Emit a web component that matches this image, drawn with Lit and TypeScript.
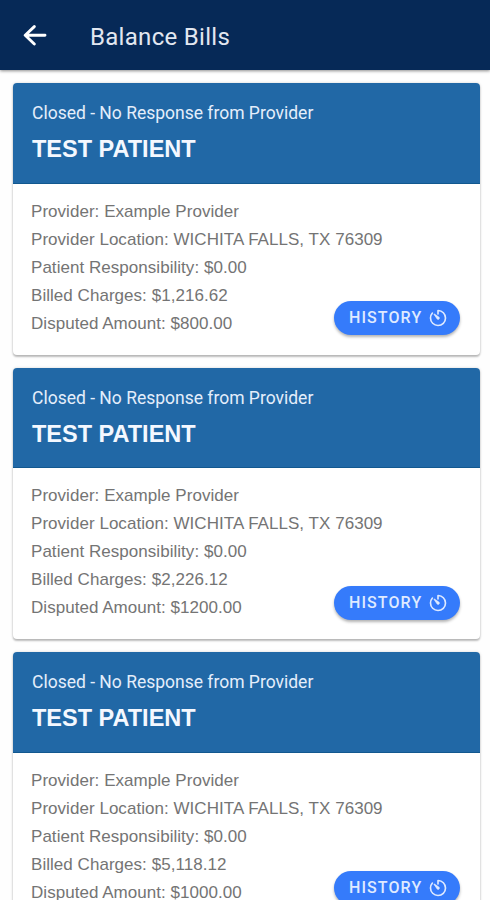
import { LitElement, html, css } from "lit";
import { customElement, property } from "lit/decorators.js";

interface Bill {
  status: string;
  patient: string;
  provider: string;
  location: string;
  responsibility: string;
  billed: string;
  disputed: string;
}

const bill = (billed: string, disputed: string): Bill => ({
  status: "Closed - No Response from Provider",
  patient: "TEST PATIENT",
  provider: "Example Provider",
  location: "WICHITA FALLS, TX 76309",
  responsibility: "$0.00",
  billed,
  disputed,
});

const bills: Bill[] = [
  bill("$1,216.62", "$800.00"),
  bill("$2,226.12", "$1200.00"),
  bill("$5,118.12", "$1000.00"),
];

@customElement("bill-card")
class BillCard extends LitElement {
  @property({ attribute: false }) bill!: Bill;

  static styles = css`
    :host {
      display: block;
      height: 271.5px;
      box-sizing: border-box;
      border-radius: 4px;
      background: #fff;
      box-shadow: 0 2px 2px rgba(0, 0, 0, 0.24), 0 0 3px rgba(0, 0, 0, 0.16);
      overflow: hidden;
    }
    .head {
      height: 100.5px;
      box-sizing: border-box;
      padding: 18px 19.5px 0;
      background: #2168a6;
      border-bottom: 1px solid #12588f;
    }
    .status {
      font: 400 17.5px/24px Roboto, sans-serif;
      color: #e4eefb;
      white-space: nowrap;
    }
    .patient {
      margin-top: 9px;
      font: 700 23.5px/30px "Liberation Sans", sans-serif;
      color: #f4f8ff;
      white-space: nowrap;
    }
    .body {
      display: flex;
      justify-content: space-between;
      padding: 14px 20px 0 18.5px;
    }
    .lines {
      font: 400 17px/28px "Liberation Sans", sans-serif;
      letter-spacing: 0.04px;
      color: #747474;
      white-space: nowrap;
    }
    .history {
      align-self: flex-end;
      flex: none;
      display: flex;
      align-items: center;
      width: 125.5px;
      height: 34px;
      margin: 0 0 2.2px -60px;
      padding: 0 0 0 15px;
      box-sizing: border-box;
      border: 0;
      border-radius: 17px;
      background: #357bfb;
      box-shadow: 0 2px 3px rgba(0, 0, 0, 0.3);
      color: #dfeaff;
      font: 500 16px/34px Roboto, sans-serif;
      letter-spacing: 1.1px;
    }
    .timer {
      width: 20px;
      height: 20px;
      margin-left: 6px;
      flex: none;
    }
  `;

  render() {
    const b = this.bill;
    return html`
      <div class="head">
        <div class="status">${b.status}</div>
        <div class="patient">${b.patient}</div>
      </div>
      <div class="body">
        <div class="lines">
          <div>Provider: ${b.provider}</div>
          <div>Provider Location: ${b.location}</div>
          <div>Patient Responsibility: ${b.responsibility}</div>
          <div>Billed Charges: ${b.billed}</div>
          <div>Disputed Amount: ${b.disputed}</div>
        </div>
        <button class="history">
          HISTORY
          <svg class="timer" viewBox="0 0 512 512">
            <path
              d="M112.91 128A191.85 191.85 0 0 0 64 254c-1.18 106.35 85.65 193.8 192 194 106.2.2 192-85.83 192-192 0-104.54-83.55-189.61-187.5-192a4.36 4.36 0 0 0-4.5 4.37V152"
              fill="none"
              stroke="currentColor"
              stroke-width="42"
              stroke-linecap="round"
              stroke-linejoin="round"
            />
            <path
              d="M233.38 278.63l-79-113a8.13 8.13 0 0 1 11.32-11.32l113 79a32.5 32.5 0 0 1-37.25 53.26 33.21 33.21 0 0 1-8.07-7.94z"
              fill="currentColor"
              stroke="currentColor"
              stroke-width="16"
            />
          </svg>
        </button>
      </div>
    `;
  }
}

@customElement("app-root")
class AppRoot extends LitElement {
  static styles = css`
    :host {
      display: block;
      height: 900px;
      overflow: hidden;
      background: #fefefe;
    }
    .bar {
      display: flex;
      align-items: center;
      height: 69.5px;
      padding: 4px 0 0 22px;
      box-sizing: border-box;
      background: #062957;
      box-shadow: 0 1px 3px rgba(0, 0, 0, 0.45);
      color: #e2e7f0;
      font: 400 24px/32px Roboto, sans-serif;
      letter-spacing: 0.3px;
      white-space: nowrap;
    }
    .back {
      width: 25px;
      height: 24px;
      margin-right: 43px;
      color: #fff;
    }
    .list {
      display: flex;
      flex-direction: column;
      gap: 13.2px;
      padding: 13.5px 10.5px 0 12.5px;
    }
  `;

  render() {
    return html`
      <header class="bar">
        <svg class="back" viewBox="0 0 25 24">
          <path
            d="M23 10.3H4M12.3 1.6L3.2 10.3L12.3 19"
            fill="none"
            stroke="currentColor"
            stroke-width="2.9"
            stroke-linecap="round"
            stroke-linejoin="round"
          />
        </svg>
        <span>Balance Bills</span>
      </header>
      <main class="list">
        ${bills.map((b) => html`<bill-card .bill=${b}></bill-card>`)}
      </main>
    `;
  }
}
